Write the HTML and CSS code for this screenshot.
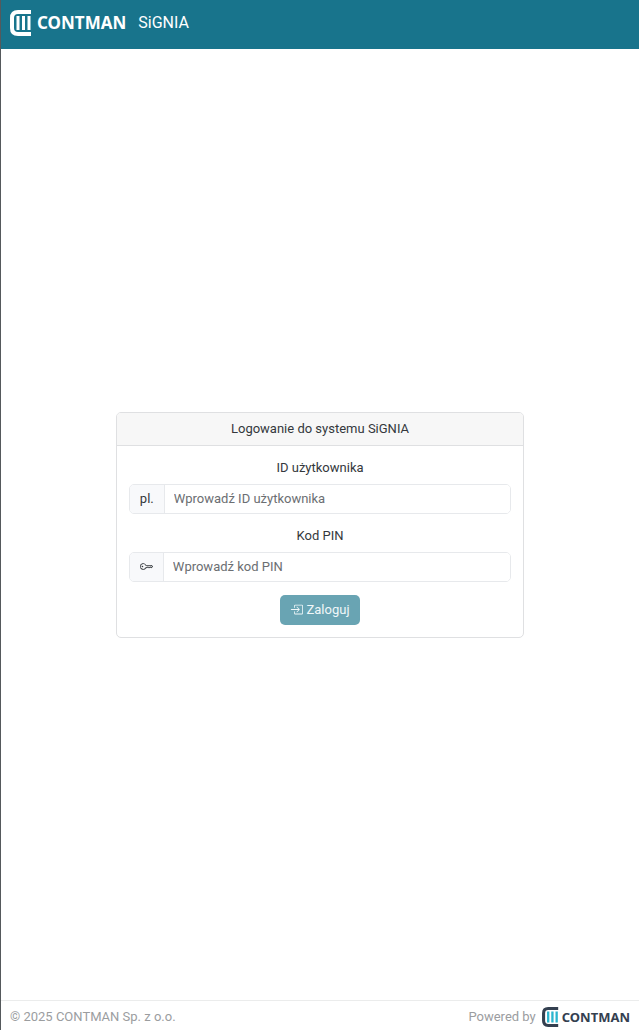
FILE: index.html
```html
<!DOCTYPE html>
<html lang="pl">
<head>
    <meta charset="utf-8">
    <meta name="viewport" content="width=device-width, initial-scale=1">
    <title>SiGNIA</title>
    <link rel="stylesheet" href="styles.css">
</head>
<body>
    <header class="navbar">
        <a class="brand" href="#">
            <svg class="brand-mark" viewBox="0 0 22 26" aria-hidden="true">
                <path class="mark-frame" d="M21 2H8Q2 2 2 8V18Q2 24 8 24H21"/>
                <path class="mark-bars" d="M8 6V20M13.500 6V20M19 6V20"/>
            </svg>
            <span class="brand-name">CONTMAN</span>
        </a>
        <span class="app-name">SiGNIA</span>
    </header>

    <main class="content">
        <form class="card">
            <h1 class="card-header">Logowanie do systemu SiGNIA</h1>
            <div class="card-body">
                <label for="userId">ID użytkownika</label>
                <div class="input-group">
                    <span class="input-addon">pl.</span>
                    <input type="text" id="userId" name="userId" placeholder="Wprowadź ID użytkownika">
                </div>

                <label for="pin">Kod PIN</label>
                <div class="input-group">
                    <span class="input-addon">
                        <svg class="icon" viewBox="0 0 16 16" aria-hidden="true">
                            <path d="M0 8a4 4 0 0 1 7.465-2H14a.5.5 0 0 1 .354.146l1.500 1.500a.5.5 0 0 1 0 .708l-1.500 1.500a.5.5 0 0 1-.708 0L13 9.207l-.646.647a.5.5 0 0 1-.708 0L11 9.207l-.646.647a.5.5 0 0 1-.708 0L9 9.207l-.646.647A.5.5 0 0 1 8 10h-.535A4 4 0 0 1 0 8m4-3a3 3 0 1 0 2.712 4.285A.5.5 0 0 1 7.163 9h.63l.853-.854a.5.5 0 0 1 .708 0l.646.647.646-.647a.5.5 0 0 1 .708 0l.646.647.646-.647a.5.5 0 0 1 .708 0l.646.647.793-.793-1-1h-6.630a.5.5 0 0 1-.451-.285A3 3 0 0 0 4 5"/>
                            <path d="M4 8a1 1 0 1 1-2 0 1 1 0 0 1 2 0"/>
                        </svg>
                    </span>
                    <input type="password" id="pin" name="pin" placeholder="Wprowadź kod PIN">
                </div>

                <button type="submit" class="btn" disabled>
                    <svg class="icon" viewBox="0 0 16 16" aria-hidden="true">
                        <path fill-rule="evenodd" d="M6 3.500a.5.5 0 0 1 .5-.5h8a.5.5 0 0 1 .5.5v9a.5.5 0 0 1-.5.5h-8a.5.5 0 0 1-.5-.5v-2a.5.5 0 0 0-1 0v2A1.500 1.500 0 0 0 6.500 14h8a1.500 1.500 0 0 0 1.500-1.500v-9A1.500 1.500 0 0 0 14.500 2h-8A1.500 1.500 0 0 0 5 3.500v2a.5.5 0 0 0 1 0z"/>
                        <path fill-rule="evenodd" d="M11.854 8.354a.5.5 0 0 0 0-.708l-3-3a.5.5 0 1 0-.708.708L10.293 7.500H1.500a.5.5 0 0 0 0 1h8.793l-2.147 2.146a.5.5 0 0 0 .708.708z"/>
                    </svg>
                    Zaloguj
                </button>
            </div>
        </form>
    </main>

    <footer class="footer">
        <span>© 2025 CONTMAN Sp. z o.o.</span>
        <span class="powered">
            Powered by
            <a class="brand brand-small" href="#">
                <svg class="brand-mark" viewBox="0 0 22 26" aria-hidden="true">
                    <path class="mark-frame" d="M21 2H8Q2 2 2 8V18Q2 24 8 24H21"/>
                    <path class="mark-bars" d="M8 6V20M13.500 6V20M19 6V20"/>
                </svg>
                <span class="brand-name">CONTMAN</span>
            </a>
        </span>
    </footer>
</body>
</html>
```
FILE: styles.css
```css
* {
    box-sizing: border-box;
}

body {
    display: flex;
    flex-direction: column;
    min-height: 100vh;
    margin: 0;
    border-left: 1px solid #55595c;
    font-family: Roboto, sans-serif;
    font-size: 13px;
    line-height: 20px;
    color: #34383c;
    background-color: #fff;
}

.navbar {
    display: flex;
    align-items: center;
    gap: 12px;
    height: 49px;
    padding: 0 9px 3px;
    color: #fff;
    background-color: #18748c;
}

.brand {
    display: flex;
    align-items: center;
    gap: 5px;
    color: #fff;
    text-decoration: none;
}

.brand-mark {
    width: 22px;
    height: 26px;
    fill: none;
}

.mark-frame {
    stroke: currentColor;
    stroke-width: 4;
}

.mark-bars {
    stroke: currentColor;
    stroke-width: 3;
}

.brand-name {
    font-family: "Noto Sans", sans-serif;
    font-size: 17px;
    font-weight: 700;
}

.app-name {
    font-size: 16px;
}

.content {
    display: flex;
    flex: 1;
    align-items: center;
    justify-content: center;
}

.card {
    width: 64%;
    border: 1px solid #dfe0e2;
    border-radius: 5px;
    overflow: hidden;
    text-align: center;
}

.card-header {
    margin: 0;
    padding: 6px 12px;
    border-bottom: 1px solid #dfe0e2;
    font-size: 13px;
    font-weight: 400;
    background-color: #f7f7f7;
}

.card-body {
    padding: 12px;
}

.card-body label {
    display: block;
    margin-bottom: 6px;
}

.input-group {
    display: flex;
    height: 30px;
    margin-bottom: 13px;
    border: 1px solid #e7e9ec;
    border-radius: 5px;
    overflow: hidden;
}

.card-body .input-group + label {
    margin-top: -1px;
}

.input-addon {
    display: flex;
    align-items: center;
    padding: 0 10px;
    border-right: 1px solid #e7e9ec;
    background-color: #f8f9fb;
}

.input-group input {
    flex: 1;
    min-width: 0;
    padding: 0 9px;
    border: 0;
    font: inherit;
    color: inherit;
    background-color: #fff;
}

.input-group input::placeholder {
    color: #6b6e72;
    opacity: 1;
}

.icon {
    width: 13px;
    height: 13px;
    fill: currentColor;
}

.btn {
    display: inline-flex;
    align-items: center;
    gap: 3px;
    height: 30px;
    padding: 0 10px;
    border: 0;
    border-radius: 5px;
    font: inherit;
    color: #f0f7f9;
    background-color: #69a4b3;
}

.footer {
    display: flex;
    align-items: center;
    justify-content: space-between;
    height: 30px;
    padding: 2px 9px 0;
    border-top: 1px solid #ebecec;
    color: #9b9d9f;
}

.powered {
    display: flex;
    align-items: center;
    gap: 6px;
}

.brand-small {
    gap: 3px;
    color: #344050;
}

.brand-small .brand-mark {
    width: 17px;
    height: 20px;
}

.brand-small .mark-bars {
    stroke: #2bb5cf;
}

.brand-small .brand-name {
    font-size: 13px;
}
```
